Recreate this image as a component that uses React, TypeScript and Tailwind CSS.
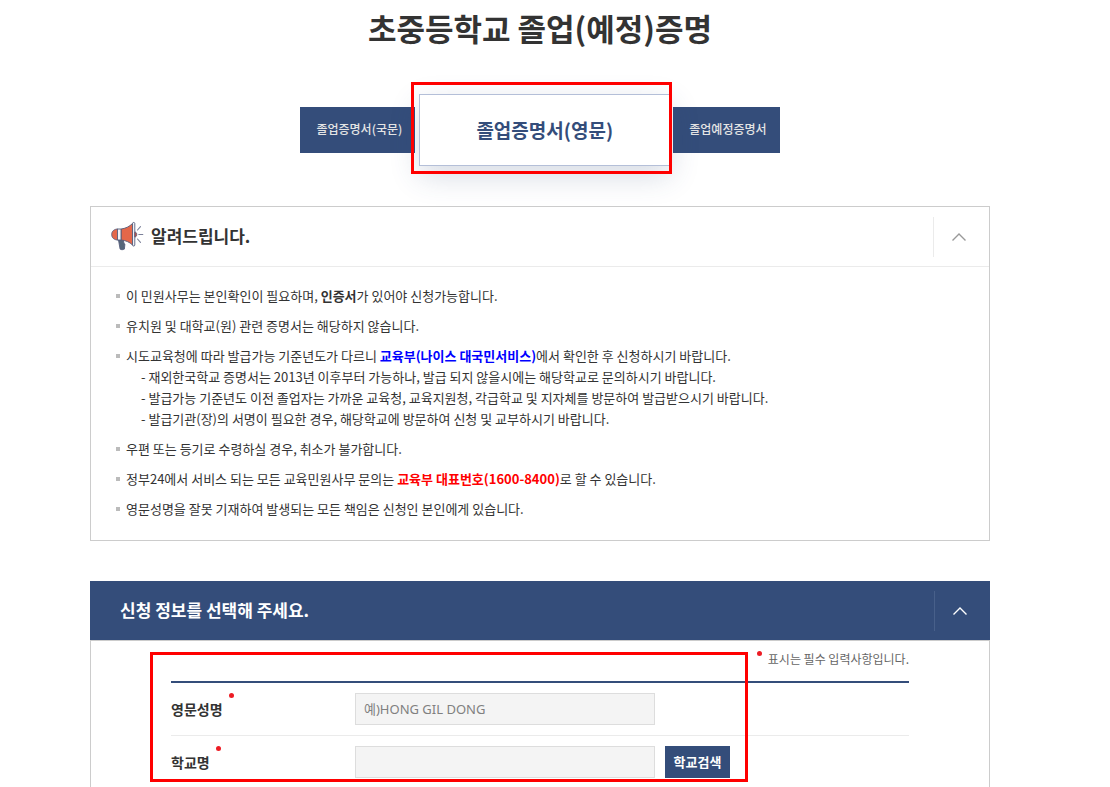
import { useState } from "react";

const tabs = [
  { id: "ko", label: "졸업증명서(국문)" },
  { id: "en", label: "졸업증명서(영문)" },
  { id: "expected", label: "졸업예정증명서" },
];

function Megaphone() {
  return (
    <svg
      width="34"
      height="30"
      viewBox="0 0 34 30"
      stroke="#565d7c"
      strokeWidth="0.9"
      strokeLinejoin="round"
      aria-hidden="true"
    >
      <path d="M7.500 19h4.800l.7 3.500.9.600-.5 5c-1.400.8-3.200.8-4.300 0z" fill="#56677a" />
      <path d="M7 8C3 8 .7 10.300.7 13.500S3 19 7 19z" fill="#e4674a" />
      <path d="M10 8c4.500-.5 8.500-2.500 11.500-5.500v21.500c-3-3-7-4.600-11.500-5z" fill="#e4674a" />
      <path d="M6.500 8H10v11H6.500z" fill="#f1f2f6" />
      <path d="M21.500 2.500c0-1.400 2.300-1.400 2.300 0v21.500c0 1.400-2.300 1.400-2.300 0z" fill="#f1f2f6" />
      <path d="M23.800 11c2.600 0 2.600 5 0 5z" fill="#c9503f" />
      <path
        d="M27.800 13.500h4M26.500 9l3-3.300M26.500 18l3 3.300"
        fill="none"
        stroke="#7b8099"
        strokeWidth="1.100"
        strokeLinecap="round"
      />
    </svg>
  );
}

function Chevron() {
  return (
    <svg
      width="16"
      height="10"
      viewBox="0 0 16 10"
      fill="none"
      stroke="currentColor"
      strokeWidth="1.400"
      aria-hidden="true"
    >
      <path d="M1.500 8.500 8 2l6.500 6.500" />
    </svg>
  );
}

function RequiredDot() {
  return <span className="size-[5px] shrink-0 self-start rounded-full bg-[#ed1c24]" />;
}

export default function App() {
  const [active, setActive] = useState("en");
  const [noticeOpen, setNoticeOpen] = useState(true);
  const [formOpen, setFormOpen] = useState(true);

  return (
    <main className="bg-white pr-[120px] pl-[90px] font-['Noto_Sans_CJK_KR','Noto_Sans',sans-serif] text-[13px] leading-[21px] text-[#333]">
      <h1 className="pt-1.5 pb-0.5 text-center text-[31px] leading-[44px] font-bold">
        초중등학교 졸업(예정)증명
      </h1>

      {/* Certificate tabs */}
      <nav className="mt-[42px] flex items-center justify-center">
        {tabs.map((tab) =>
          tab.id === active ? (
            <div key={tab.id} className="relative z-10 mr-[3px] ml-1">
              <button className="block h-[72px] w-[251px] border border-[#b4bfd8] bg-white pb-0.5 text-[19px] font-bold text-[#344d7a] shadow-[0_10px_30px_rgba(52,77,122,0.2)]">
                {tab.label}
              </button>
              <div className="pointer-events-none absolute -top-3 -right-0.5 -bottom-2 -left-2 border-3 border-[#ff0000]" />
            </div>
          ) : (
            <button
              key={tab.id}
              onClick={() => setActive(tab.id)}
              className="h-[46px] bg-[#344d7a] pr-[13px] pb-0.5 pl-4 text-xs font-medium text-[#e4e4e4]"
            >
              {tab.label}
            </button>
          ),
        )}
      </nav>

      {/* Notice */}
      <section className="mt-10 border border-[#ccc]">
        <div className="flex h-[60px] items-center justify-between border-b border-[#ebebeb] pl-5">
          <h2 className="flex items-center gap-1.5 pb-0.5 text-[17px] font-bold">
            <Megaphone />
            알려드립니다.
          </h2>
          <button
            aria-label="알려드립니다"
            aria-expanded={noticeOpen}
            onClick={() => setNoticeOpen((open) => !open)}
            className="flex h-10 w-14 items-center justify-center border-l border-[#ebebeb] pr-1.5 text-[#999]"
          >
            <Chevron />
          </button>
        </div>
        {noticeOpen && (
          <ul className="space-y-[9px] px-[35px] pt-[18px] pb-[21px] [&>li]:relative [&>li]:before:absolute [&>li]:before:top-[9px] [&>li]:before:-left-2.5 [&>li]:before:size-1 [&>li]:before:bg-[#bbb]">
            <li>
              이 민원사무는 본인확인이 필요하며, <strong>인증서</strong>가 있어야 신청가능합니다.
            </li>
            <li>유치원 및 대학교(원) 관련 증명서는 해당하지 않습니다.</li>
            <li>
              시도교육청에 따라 발급가능 기준년도가 다르니{" "}
              <strong className="text-[#0000ff]">교육부(나이스 대국민서비스)</strong>에서 확인한 후
              신청하시기 바랍니다.
              <div className="pl-[15px]">
                <p>- 재외한국학교 증명서는 2013년 이후부터 가능하나, 발급 되지 않을시에는 해당학교로 문의하시기 바랍니다.</p>
                <p>- 발급가능 기준년도 이전 졸업자는 가까운 교육청, 교육지원청, 각급학교 및 지자체를 방문하여 발급받으시기 바랍니다.</p>
                <p>- 발급기관(장)의 서명이 필요한 경우, 해당학교에 방문하여 신청 및 교부하시기 바랍니다.</p>
              </div>
            </li>
            <li>우편 또는 등기로 수령하실 경우, 취소가 불가합니다.</li>
            <li>
              정부24에서 서비스 되는 모든 교육민원사무 문의는{" "}
              <strong className="text-[#ff0000]">교육부 대표번호(1600-8400)</strong>로 할 수 있습니다.
            </li>
            <li>영문성명을 잘못 기재하여 발생되는 모든 책임은 신청인 본인에게 있습니다.</li>
          </ul>
        )}
      </section>

      {/* Application form */}
      <section className="mt-10">
        <div className="flex h-[59px] items-center justify-between bg-[#344d7a] pl-[30px] text-white">
          <h2 className="pb-0.5 text-[17px] font-bold">신청 정보를 선택해 주세요.</h2>
          <button
            aria-label="신청 정보"
            aria-expanded={formOpen}
            onClick={() => setFormOpen((open) => !open)}
            className="flex h-10 w-14 items-center justify-center border-l border-[#48608a] pr-1.5"
          >
            <Chevron />
          </button>
        </div>
        {formOpen && (
          <form
            className="relative border border-b-0 border-[#ccc] px-20"
            onSubmit={(e) => e.preventDefault()}
          >
            <p className="flex h-10 items-start justify-end gap-1.5 pt-2.5 text-xs text-[#666]">
              <RequiredDot />
              표시는 필수 입력사항입니다.
            </p>
            <div className="border-t-2 border-[#344d7a]">
              <div className="flex items-center border-b border-[#ebebeb] py-2.5">
                <div className="flex h-8 w-[184px] items-center gap-1.5">
                  <label htmlFor="engName" className="text-sm font-bold">
                    영문성명
                  </label>
                  <RequiredDot />
                </div>
                <input
                  id="engName"
                  type="text"
                  placeholder="예)HONG GIL DONG"
                  className="h-8 w-[300px] border border-[#ddd] bg-[#f4f4f4] px-2 font-['Noto_Sans','Noto_Sans_CJK_KR',sans-serif] text-[13px] placeholder:text-[#808080]"
                />
              </div>
              <div className="flex items-center pt-2.5 pb-[9px]">
                <div className="flex h-8 w-[184px] items-center gap-1.5">
                  <label htmlFor="school" className="text-sm font-bold">
                    학교명
                  </label>
                  <RequiredDot />
                </div>
                <input
                  id="school"
                  type="text"
                  className="h-8 w-[300px] border border-[#ddd] bg-[#f4f4f4] px-2"
                />
                <button
                  type="button"
                  className="ml-2.5 h-8 w-[65px] bg-[#344d7a] pb-0.5 text-[13px] font-bold text-white"
                >
                  학교검색
                </button>
              </div>
            </div>
            <div className="pointer-events-none absolute top-[11px] right-[241px] bottom-[5px] left-[59px] border-3 border-[#ff0000]" />
          </form>
        )}
      </section>
    </main>
  );
}
